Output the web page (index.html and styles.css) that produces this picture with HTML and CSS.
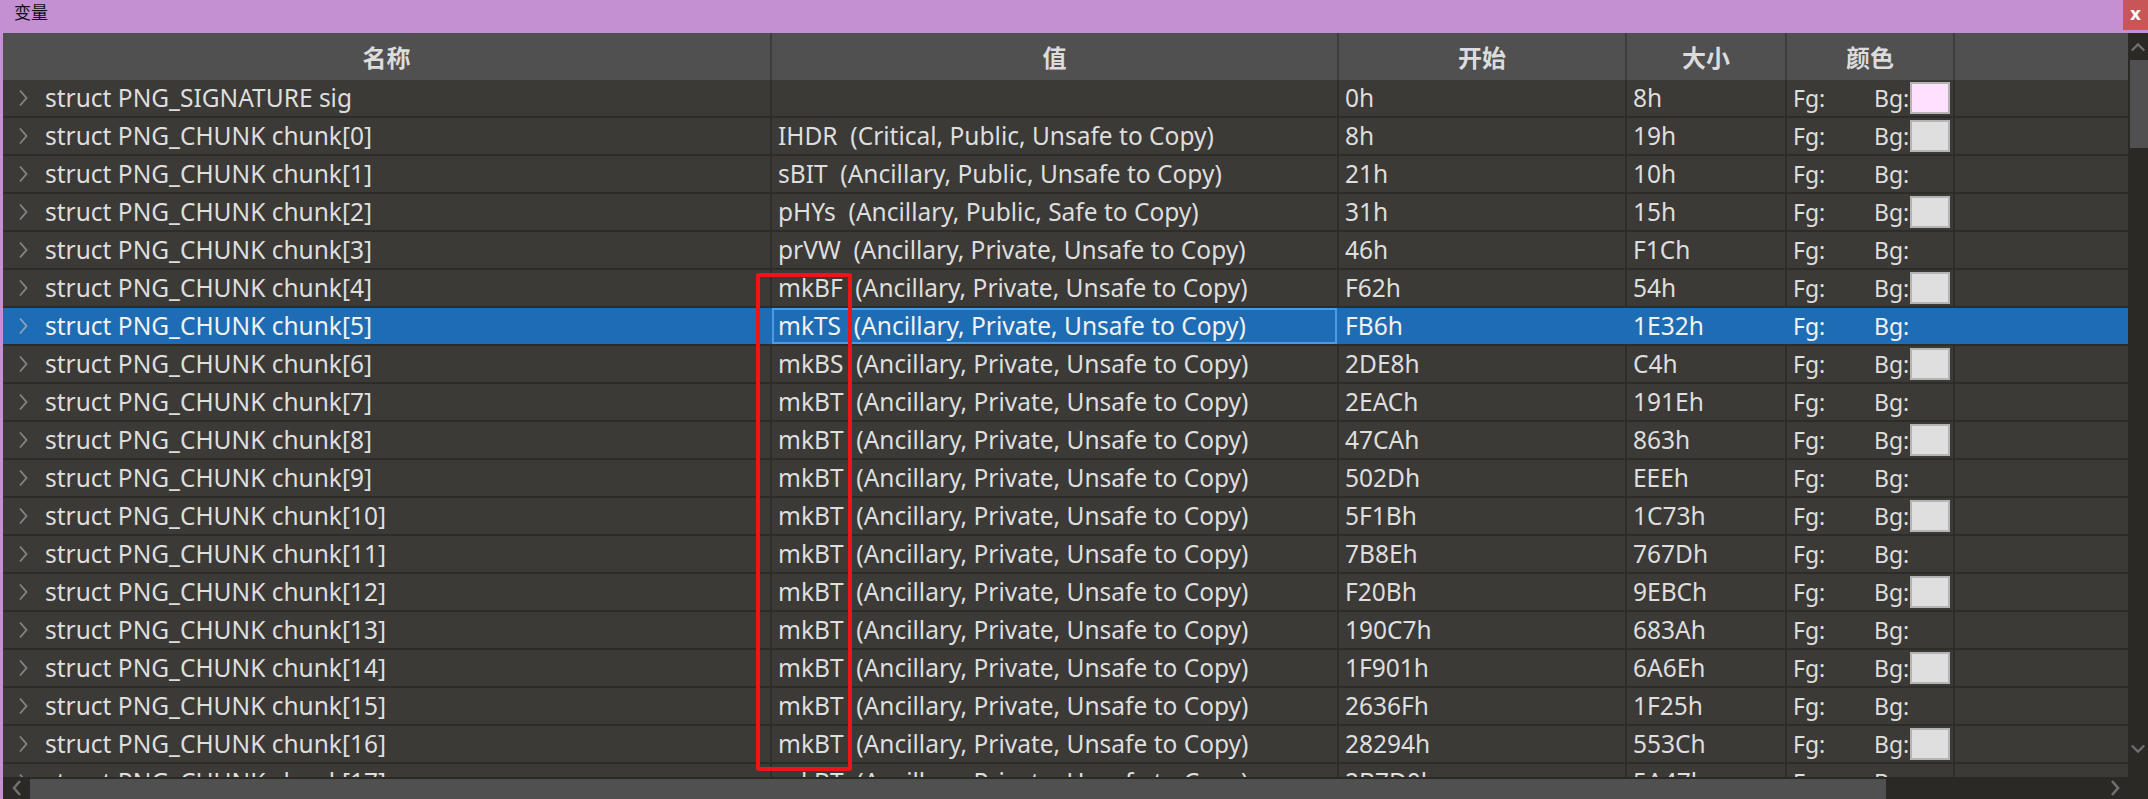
FILE: index.html
```html
<!DOCTYPE html>
<html lang="zh">
<head>
<meta charset="utf-8">
<title>变量</title>
<link rel="stylesheet" href="styles.css">
</head>
<body>
<div class="window">
  <div class="titlebar">
    <span class="title">变量</span>
    <span class="close">x</span>
  </div>
  <div class="main">
    <div class="strip"></div>
    <div class="center">
      <div class="table">
        <div class="thead">
          <div class="th">名称</div>
          <div class="th">值</div>
          <div class="th">开始</div>
          <div class="th">大小</div>
          <div class="th">颜色</div>
          <div class="th"></div>
        </div>
        <div class="tbody">
          <div class="row">
            <div class="td name"><svg class="chev" viewBox="0 0 10 18"><polyline points="2,1.5 8.5,9 2,16.5"/></svg>struct PNG_SIGNATURE sig</div>
            <div class="td val"></div>
            <div class="td">0h</div>
            <div class="td">8h</div>
            <div class="td color"><span class="fg">Fg:</span><span>Bg:</span><span class="sw pink"></span></div>
            <div class="td"></div>
          </div>
          <div class="row">
            <div class="td name"><svg class="chev" viewBox="0 0 10 18"><polyline points="2,1.5 8.5,9 2,16.5"/></svg>struct PNG_CHUNK chunk[0]</div>
            <div class="td val">IHDR  (Critical, Public, Unsafe to Copy)</div>
            <div class="td">8h</div>
            <div class="td">19h</div>
            <div class="td color"><span class="fg">Fg:</span><span>Bg:</span><span class="sw"></span></div>
            <div class="td"></div>
          </div>
          <div class="row">
            <div class="td name"><svg class="chev" viewBox="0 0 10 18"><polyline points="2,1.5 8.5,9 2,16.5"/></svg>struct PNG_CHUNK chunk[1]</div>
            <div class="td val">sBIT  (Ancillary, Public, Unsafe to Copy)</div>
            <div class="td">21h</div>
            <div class="td">10h</div>
            <div class="td color"><span class="fg">Fg:</span><span>Bg:</span></div>
            <div class="td"></div>
          </div>
          <div class="row">
            <div class="td name"><svg class="chev" viewBox="0 0 10 18"><polyline points="2,1.5 8.5,9 2,16.5"/></svg>struct PNG_CHUNK chunk[2]</div>
            <div class="td val">pHYs  (Ancillary, Public, Safe to Copy)</div>
            <div class="td">31h</div>
            <div class="td">15h</div>
            <div class="td color"><span class="fg">Fg:</span><span>Bg:</span><span class="sw"></span></div>
            <div class="td"></div>
          </div>
          <div class="row">
            <div class="td name"><svg class="chev" viewBox="0 0 10 18"><polyline points="2,1.5 8.5,9 2,16.5"/></svg>struct PNG_CHUNK chunk[3]</div>
            <div class="td val">prVW  (Ancillary, Private, Unsafe to Copy)</div>
            <div class="td">46h</div>
            <div class="td">F1Ch</div>
            <div class="td color"><span class="fg">Fg:</span><span>Bg:</span></div>
            <div class="td"></div>
          </div>
          <div class="row">
            <div class="td name"><svg class="chev" viewBox="0 0 10 18"><polyline points="2,1.5 8.5,9 2,16.5"/></svg>struct PNG_CHUNK chunk[4]</div>
            <div class="td val">mkBF  (Ancillary, Private, Unsafe to Copy)</div>
            <div class="td">F62h</div>
            <div class="td">54h</div>
            <div class="td color"><span class="fg">Fg:</span><span>Bg:</span><span class="sw"></span></div>
            <div class="td"></div>
          </div>
          <div class="row selected">
            <div class="td name"><svg class="chev" viewBox="0 0 10 18"><polyline points="2,1.5 8.5,9 2,16.5"/></svg>struct PNG_CHUNK chunk[5]</div>
            <div class="td val focus">mkTS  (Ancillary, Private, Unsafe to Copy)</div>
            <div class="td">FB6h</div>
            <div class="td">1E32h</div>
            <div class="td color"><span class="fg">Fg:</span><span>Bg:</span></div>
            <div class="td"></div>
          </div>
          <div class="row">
            <div class="td name"><svg class="chev" viewBox="0 0 10 18"><polyline points="2,1.5 8.5,9 2,16.5"/></svg>struct PNG_CHUNK chunk[6]</div>
            <div class="td val">mkBS  (Ancillary, Private, Unsafe to Copy)</div>
            <div class="td">2DE8h</div>
            <div class="td">C4h</div>
            <div class="td color"><span class="fg">Fg:</span><span>Bg:</span><span class="sw"></span></div>
            <div class="td"></div>
          </div>
          <div class="row">
            <div class="td name"><svg class="chev" viewBox="0 0 10 18"><polyline points="2,1.5 8.5,9 2,16.5"/></svg>struct PNG_CHUNK chunk[7]</div>
            <div class="td val">mkBT  (Ancillary, Private, Unsafe to Copy)</div>
            <div class="td">2EACh</div>
            <div class="td">191Eh</div>
            <div class="td color"><span class="fg">Fg:</span><span>Bg:</span></div>
            <div class="td"></div>
          </div>
          <div class="row">
            <div class="td name"><svg class="chev" viewBox="0 0 10 18"><polyline points="2,1.5 8.5,9 2,16.5"/></svg>struct PNG_CHUNK chunk[8]</div>
            <div class="td val">mkBT  (Ancillary, Private, Unsafe to Copy)</div>
            <div class="td">47CAh</div>
            <div class="td">863h</div>
            <div class="td color"><span class="fg">Fg:</span><span>Bg:</span><span class="sw"></span></div>
            <div class="td"></div>
          </div>
          <div class="row">
            <div class="td name"><svg class="chev" viewBox="0 0 10 18"><polyline points="2,1.5 8.5,9 2,16.5"/></svg>struct PNG_CHUNK chunk[9]</div>
            <div class="td val">mkBT  (Ancillary, Private, Unsafe to Copy)</div>
            <div class="td">502Dh</div>
            <div class="td">EEEh</div>
            <div class="td color"><span class="fg">Fg:</span><span>Bg:</span></div>
            <div class="td"></div>
          </div>
          <div class="row">
            <div class="td name"><svg class="chev" viewBox="0 0 10 18"><polyline points="2,1.5 8.5,9 2,16.5"/></svg>struct PNG_CHUNK chunk[10]</div>
            <div class="td val">mkBT  (Ancillary, Private, Unsafe to Copy)</div>
            <div class="td">5F1Bh</div>
            <div class="td">1C73h</div>
            <div class="td color"><span class="fg">Fg:</span><span>Bg:</span><span class="sw"></span></div>
            <div class="td"></div>
          </div>
          <div class="row">
            <div class="td name"><svg class="chev" viewBox="0 0 10 18"><polyline points="2,1.5 8.5,9 2,16.5"/></svg>struct PNG_CHUNK chunk[11]</div>
            <div class="td val">mkBT  (Ancillary, Private, Unsafe to Copy)</div>
            <div class="td">7B8Eh</div>
            <div class="td">767Dh</div>
            <div class="td color"><span class="fg">Fg:</span><span>Bg:</span></div>
            <div class="td"></div>
          </div>
          <div class="row">
            <div class="td name"><svg class="chev" viewBox="0 0 10 18"><polyline points="2,1.5 8.5,9 2,16.5"/></svg>struct PNG_CHUNK chunk[12]</div>
            <div class="td val">mkBT  (Ancillary, Private, Unsafe to Copy)</div>
            <div class="td">F20Bh</div>
            <div class="td">9EBCh</div>
            <div class="td color"><span class="fg">Fg:</span><span>Bg:</span><span class="sw"></span></div>
            <div class="td"></div>
          </div>
          <div class="row">
            <div class="td name"><svg class="chev" viewBox="0 0 10 18"><polyline points="2,1.5 8.5,9 2,16.5"/></svg>struct PNG_CHUNK chunk[13]</div>
            <div class="td val">mkBT  (Ancillary, Private, Unsafe to Copy)</div>
            <div class="td">190C7h</div>
            <div class="td">683Ah</div>
            <div class="td color"><span class="fg">Fg:</span><span>Bg:</span></div>
            <div class="td"></div>
          </div>
          <div class="row">
            <div class="td name"><svg class="chev" viewBox="0 0 10 18"><polyline points="2,1.5 8.5,9 2,16.5"/></svg>struct PNG_CHUNK chunk[14]</div>
            <div class="td val">mkBT  (Ancillary, Private, Unsafe to Copy)</div>
            <div class="td">1F901h</div>
            <div class="td">6A6Eh</div>
            <div class="td color"><span class="fg">Fg:</span><span>Bg:</span><span class="sw"></span></div>
            <div class="td"></div>
          </div>
          <div class="row">
            <div class="td name"><svg class="chev" viewBox="0 0 10 18"><polyline points="2,1.5 8.5,9 2,16.5"/></svg>struct PNG_CHUNK chunk[15]</div>
            <div class="td val">mkBT  (Ancillary, Private, Unsafe to Copy)</div>
            <div class="td">2636Fh</div>
            <div class="td">1F25h</div>
            <div class="td color"><span class="fg">Fg:</span><span>Bg:</span></div>
            <div class="td"></div>
          </div>
          <div class="row">
            <div class="td name"><svg class="chev" viewBox="0 0 10 18"><polyline points="2,1.5 8.5,9 2,16.5"/></svg>struct PNG_CHUNK chunk[16]</div>
            <div class="td val">mkBT  (Ancillary, Private, Unsafe to Copy)</div>
            <div class="td">28294h</div>
            <div class="td">553Ch</div>
            <div class="td color"><span class="fg">Fg:</span><span>Bg:</span><span class="sw"></span></div>
            <div class="td"></div>
          </div>
          <div class="row">
            <div class="td name"><svg class="chev" viewBox="0 0 10 18"><polyline points="2,1.5 8.5,9 2,16.5"/></svg>struct PNG_CHUNK chunk[17]</div>
            <div class="td val">mkBT  (Ancillary, Private, Unsafe to Copy)</div>
            <div class="td">2B7D0h</div>
            <div class="td">5A47h</div>
            <div class="td color"><span class="fg">Fg:</span><span>Bg:</span></div>
            <div class="td"></div>
          </div>
        </div>
      </div>
      <div class="hscroll">
        <div class="harrow"><svg viewBox="0 0 12 18"><polyline points="9,2 3,9 9,16"/></svg></div>
        <div class="hthumb"></div>
        <div class="htrack"></div>
        <div class="harrow"><svg viewBox="0 0 12 18"><polyline points="3,2 9,9 3,16"/></svg></div>
      </div>
    </div>
    <div class="vside">
      <div class="vscroll">
        <div class="varrow"><svg viewBox="0 0 18 12"><polyline points="2,10 9,3 16,10"/></svg></div>
        <div class="vthumb"></div>
        <div class="vtrack"></div>
        <div class="varrow down"><svg viewBox="0 0 18 12"><polyline points="2,2 9,9 16,2"/></svg></div>
      </div>
      <div class="corner"></div>
    </div>
  </div>
  <div class="annot"></div>
</div>
</body>
</html>
```

FILE: styles.css
```css
html, body {
  margin: 0;
  padding: 0;
  background: #3b3a36;
}
body {
  width: 2148px;
  height: 799px;
  overflow: hidden;
  font-family: "Noto Sans", "Noto Sans CJK SC", sans-serif;
}
.window {
  position: relative;
  width: 2148px;
  height: 799px;
  overflow: hidden;
}
.titlebar {
  height: 33px;
  background: #c590d1;
  display: flex;
  justify-content: space-between;
  align-items: flex-start;
}
.title {
  font-family: "Noto Sans CJK SC", sans-serif;
  font-size: 17px;
  line-height: 24px;
  color: #111;
  padding-left: 14px;
}
.close {
  width: 25px;
  height: 30px;
  background: #c85656;
  color: #fff;
  font-family: "DejaVu Sans", sans-serif;
  font-weight: bold;
  font-size: 17px;
  line-height: 28px;
  text-align: center;
}
.main {
  display: flex;
  height: 766px;
}
.strip {
  width: 3px;
  background: #c590d1;
}
.center {
  width: 2125px;
  display: flex;
  flex-direction: column;
}
.table {
  height: 744px;
  overflow: hidden;
  background: #3b3a36;
}
.thead {
  display: grid;
  grid-template-columns: 767px 567px 288px 160px 168px 175px;
  height: 47px;
  background: #505050;
}
.th {
  font-family: "Noto Sans CJK SC", sans-serif;
  font-weight: bold;
  font-size: 24px;
  color: #dcdcdc;
  text-align: center;
  line-height: 47px;
  box-sizing: border-box;
}
.th + .th {
  border-left: 2px solid #3d3d3c;
}
.tbody {
  height: 697px;
  overflow: hidden;
}
.row {
  display: grid;
  grid-template-columns: 767px 567px 288px 160px 168px 175px;
  height: 38px;
  box-sizing: border-box;
  border-bottom: 2px solid #2d2c29;
  background: #3b3a36;
  color: #dedede;
  font-size: 24.5px;
}
.td {
  box-sizing: border-box;
  height: 36px;
  line-height: 36px;
  padding-left: 6px;
  white-space: pre;
  overflow: hidden;
  display: flex;
  align-items: center;
}
.td + .td {
  border-left: 2px solid #2f2e2b;
}
.td.name {
  padding-left: 15px;
}
.chev {
  width: 10px;
  height: 18px;
  margin-right: 17px;
  flex: none;
}
.chev polyline {
  fill: none;
  stroke: #858585;
  stroke-width: 1.8;
}
.td.val {
  padding-left: 6px;
}
.td.color {
  font-size: 23px;
}
.color .fg {
  width: 81px;
  flex: none;
}
.sw {
  width: 40px;
  height: 32px;
  box-sizing: border-box;
  border: 2px solid #b4b4b4;
  background: #dfdfdf;
  margin-left: 1px;
  flex: none;
}
.sw.pink {
  background: #ffe0ff;
}
.row.selected {
  background: #1e6cb3;
  color: #f2f2f2;
}
.row.selected .td + .td {
  border-left-color: #1e6cb3;
}
.row.selected .chev polyline {
  stroke: #8fa3b8;
}
.td.focus {
  box-shadow: inset 0 0 0 2px #4c9be6;
}
.hscroll {
  height: 22px;
  display: flex;
  background: #2a2926;
}
.harrow {
  width: 27px;
  display: flex;
  align-items: center;
  justify-content: center;
}
.harrow svg {
  width: 12px;
  height: 18px;
}
.harrow polyline, .varrow polyline {
  fill: none;
  stroke: #6f6f6f;
  stroke-width: 2.6;
}
.hthumb {
  width: 1856px;
  margin-top: 2px;
  background: #505050;
}
.htrack {
  flex: 1;
}
.vside {
  width: 20px;
  display: flex;
  flex-direction: column;
}
.vscroll {
  height: 744px;
  display: flex;
  flex-direction: column;
  background: #2a2926;
}
.varrow {
  height: 27px;
  display: flex;
  align-items: center;
  justify-content: center;
}
.varrow svg {
  width: 16px;
  height: 12px;
}
.varrow.down {
  height: 34px;
  align-items: flex-start;
}
.vthumb {
  height: 88px;
  margin-left: 2px;
  background: #505050;
}
.vtrack {
  flex: 1;
}
.corner {
  height: 22px;
  background: #2a2926;
}
.annot {
  position: absolute;
  left: 756px;
  top: 273px;
  width: 96px;
  height: 498px;
  box-sizing: border-box;
  border: 4px solid #f01414;
  border-radius: 3px;
}
```
